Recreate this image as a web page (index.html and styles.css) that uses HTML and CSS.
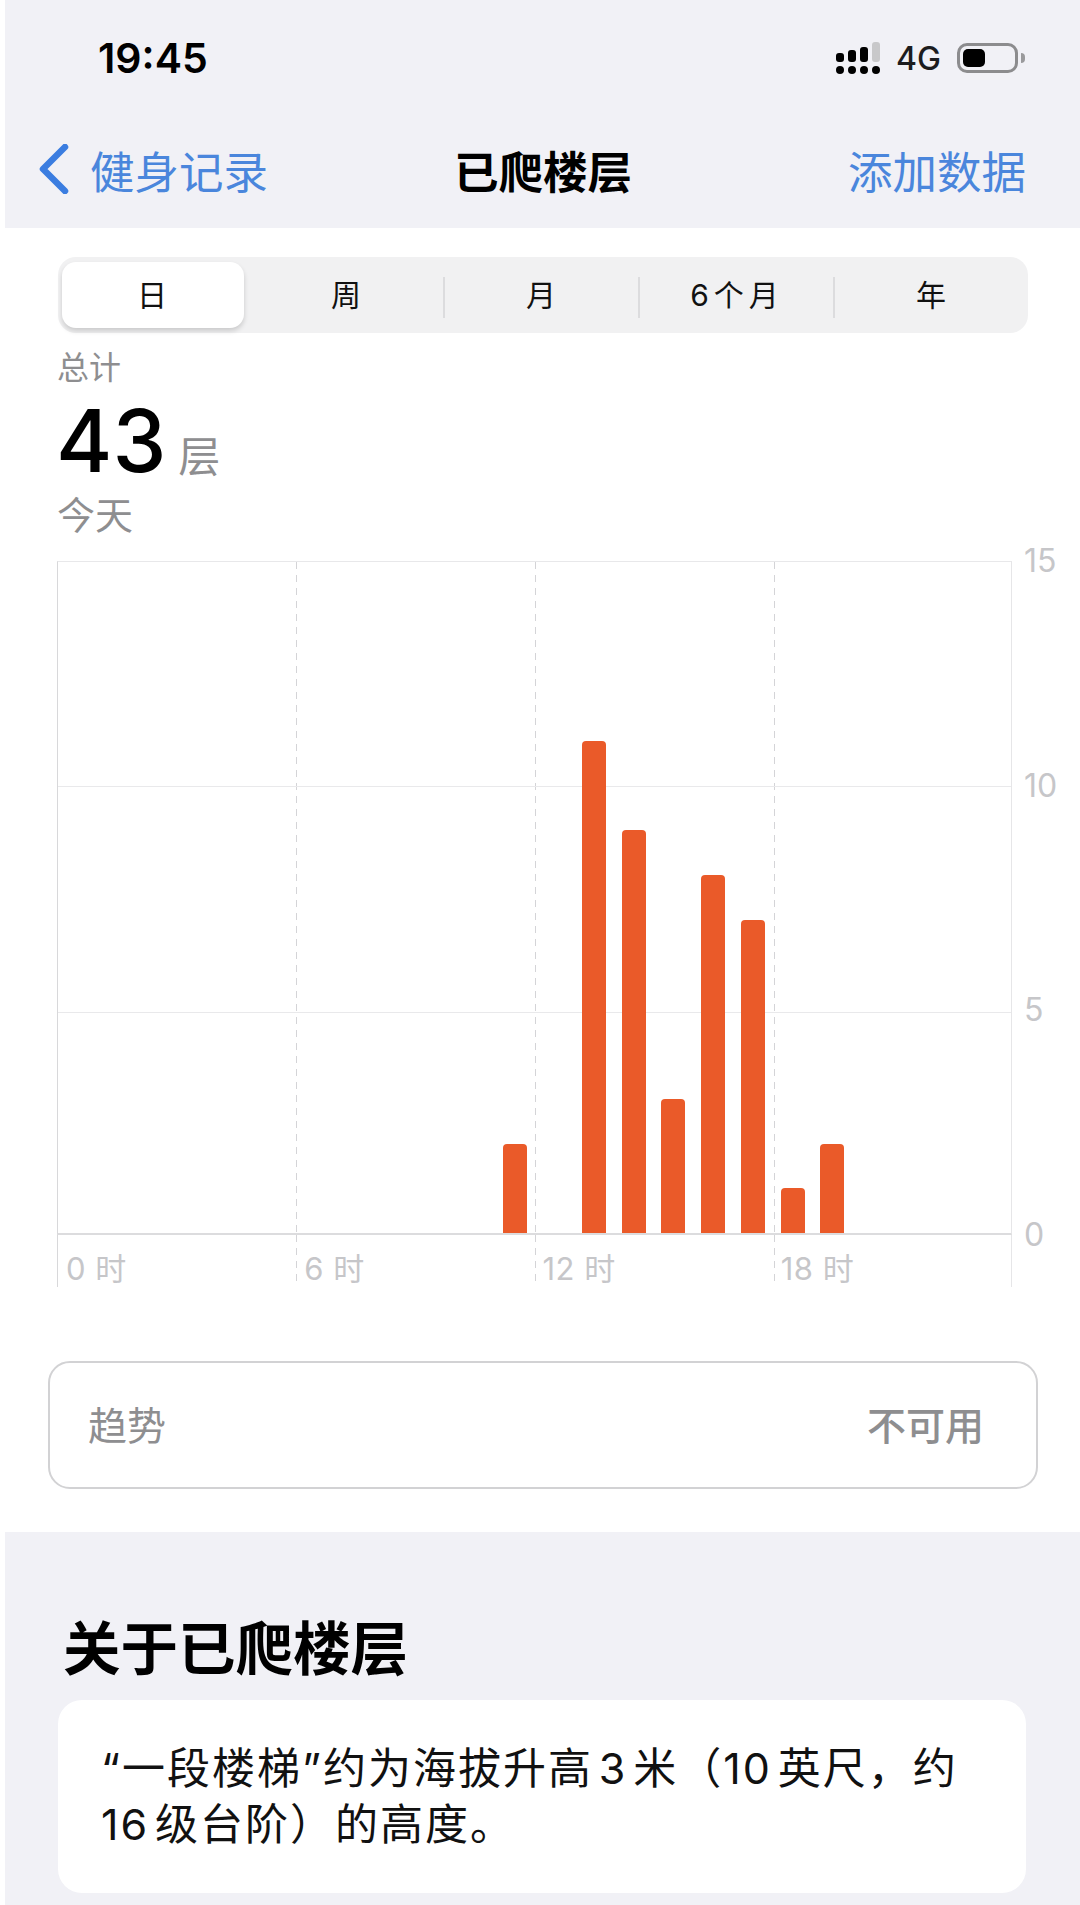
FILE: index.html
```html
<!DOCTYPE html>
<html lang="zh-CN">
<head>
    <meta charset="UTF-8">
    <meta name="viewport" content="width=device-width, initial-scale=1.0">
    <title>已爬楼层</title>
    <link rel="stylesheet" href="styles.css">
</head>
<body>
    <header class="top">
        <div class="status">
            <div class="clock">19:45</div>
            <div class="status-right">
                <div class="signal">
                    <i class="s1"></i><i class="s2"></i><i class="s3"></i><i class="s4"></i>
                    <b></b><b></b><b></b><b></b>
                </div>
                <div class="net">4G</div>
                <div class="battery"><div class="battery-fill"></div></div>
                <div class="battery-nub"></div>
            </div>
        </div>
        <nav class="nav">
            <a class="back">
                <svg class="chevron" width="32" height="50" viewBox="0 0 32 50"><path d="M28 3 L6 25 L28 47" fill="none" stroke="#3b7de0" stroke-width="6.5" stroke-linecap="round" stroke-linejoin="round"/></svg>
                <span>健身记录</span>
            </a>
            <div class="nav-title">已爬楼层</div>
            <a class="nav-add">添加数据</a>
        </nav>
    </header>

    <main class="content">
        <div class="segments">
            <div class="seg seg-on">日</div>
            <div class="seg">周</div>
            <div class="seg seg-line">月</div>
            <div class="seg seg-line seg-wide">6个月</div>
            <div class="seg seg-line">年</div>
        </div>

        <div class="total-label">总计</div>
        <div class="total"><span class="total-num">43</span><span class="total-unit">层</span></div>
        <div class="total-date">今天</div>

        <div class="chart">
            <div class="plot">
                <div class="bar" style="grid-column:12;height:13.33%"></div>
                <div class="bar" style="grid-column:14;height:73.33%"></div>
                <div class="bar" style="grid-column:15;height:60%"></div>
                <div class="bar" style="grid-column:16;height:20%"></div>
                <div class="bar" style="grid-column:17;height:53.33%"></div>
                <div class="bar" style="grid-column:18;height:46.67%"></div>
                <div class="bar" style="grid-column:19;height:6.67%"></div>
                <div class="bar" style="grid-column:20;height:13.33%"></div>
            </div>
            <div class="y-axis">
                <span>15</span><span>10</span><span>5</span><span>0</span>
            </div>
            <div class="x-axis">
                <span>0 时</span><span>6 时</span><span>12 时</span><span>18 时</span>
            </div>
        </div>

        <div class="trend">
            <span class="trend-name">趋势</span>
            <span class="trend-value">不可用</span>
        </div>
    </main>

    <section class="about">
        <h2>关于已爬楼层</h2>
        <div class="about-card">
            <div class="about-line">“一段楼梯”约为海拔升高&#8202;3&#8202;米（10&#8202;英尺，约</div>
            <div class="about-line">16&#8202;级台阶）的高度。</div>
        </div>
    </section>
</body>
</html>
```

FILE: styles.css
```css
* {
    box-sizing: border-box;
}

body {
    margin: 0;
    width: 1080px;
    height: 1905px;
    overflow: hidden;
    background: #fff;
    color: #000;
    font-family: Inter, "Noto Sans CJK SC", sans-serif;
}

/* top bar */
.top {
    margin-left: 5px;
    height: 228px;
    background: #f1f1f6;
}

.status {
    display: flex;
    justify-content: space-between;
    align-items: center;
    height: 116px;
    padding: 0 55px 0 93px;
}

.clock {
    font-size: 41px;
    font-weight: 600;
}

.status-right {
    display: flex;
    align-items: center;
}

.signal {
    display: grid;
    grid-template-columns: repeat(4, 8px);
    grid-template-rows: 20px 8px;
    column-gap: 4px;
    row-gap: 4px;
    align-items: end;
    margin-right: 16px;
}

.signal i {
    display: block;
    width: 8px;
    border-radius: 3px;
    background: #000;
}

.signal .s1 { height: 9px; }
.signal .s2 { height: 12px; }
.signal .s3 { height: 15px; }
.signal .s4 { height: 20px; background: #c8c8ca; }

.signal b {
    display: block;
    height: 8px;
    border-radius: 4px;
    background: #000;
}

.net {
    font-size: 32px;
    font-weight: 500;
    color: #1c1c1e;
    margin-right: 16px;
}

.battery {
    width: 61px;
    height: 30px;
    padding: 3px;
    border: 3px solid #8c8c8e;
    border-radius: 10px;
}

.battery-fill {
    width: 22px;
    height: 100%;
    border-radius: 5px;
    background: #000;
}

.battery-nub {
    width: 4px;
    height: 10px;
    margin-left: 3px;
    border-radius: 0 4px 4px 0;
    background: #9a9a9c;
}

.nav {
    display: grid;
    grid-template-columns: 417px auto 1fr;
    align-items: center;
    height: 112px;
    padding: 0 54px 6px 32px;
    font-size: 44.5px;
}

.back {
    display: flex;
    align-items: center;
    gap: 21px;
    color: #4a86dc;
}

.nav-title {
    font-weight: 700;
}

.nav-add {
    text-align: right;
    color: #4a86dc;
}

/* main white area */
.content {
    padding: 29px 42px 0 48px;
}

.segments {
    display: flex;
    width: 970px;
    height: 76px;
    margin-left: 10px;
    padding: 5px 0 5px 4px;
    border-radius: 18px;
    background: #f1f1f2;
    font-size: 30px;
    color: #111;
}

.seg {
    flex: 1;
    position: relative;
    display: flex;
    justify-content: center;
    align-items: center;
    padding-bottom: 4px;
    letter-spacing: 2px;
}

.seg-line {
    padding-left: 3px;
}

.seg-wide {
    letter-spacing: 5px;
}

.seg-on {
    flex: none;
    width: 182px;
    margin-right: 7px;
    border-radius: 14px;
    background: #fff;
    box-shadow: 0 3px 5px rgba(0, 0, 0, 0.16);
}

.seg-line::before {
    content: "";
    position: absolute;
    left: 0;
    top: 15px;
    bottom: 10px;
    width: 2px;
    background: #dcdcde;
}

.total-label {
    margin: 15px 0 0 9px;
    font-size: 32px;
    line-height: 40px;
    color: #8e8e90;
}

.total {
    display: flex;
    align-items: baseline;
    margin: 8px 0 0 8px;
    line-height: 90px;
}

.total-num {
    font-size: 86px;
    font-weight: 500;
}

.total-unit {
    margin-left: 12px;
    font-size: 42px;
    color: #8e8e90;
}

.total-date {
    margin: -10px 0 0 9px;
    font-size: 38px;
    line-height: 46px;
    color: #8e8e90;
}

/* chart */
.chart {
    display: grid;
    grid-template-columns: 955px 1fr;
    grid-template-rows: 674px 52px;
    margin: 23px 0 0 9px;
}

.plot,
.x-axis {
    background-image:
        repeating-linear-gradient(to bottom, #d4d4d7 0 7px, transparent 7px 13px),
        repeating-linear-gradient(to bottom, #d4d4d7 0 7px, transparent 7px 13px),
        repeating-linear-gradient(to bottom, #d4d4d7 0 7px, transparent 7px 13px);
    background-size: 1px 100%;
    background-position: 238px 0, 477px 0, 716px 0;
    background-repeat: no-repeat;
    border-left: 1px solid #d8d8da;
    border-right: 1px solid #e6e6e8;
}

.plot {
    position: relative;
    display: grid;
    grid-template-columns: repeat(24, 1fr);
    align-items: end;
    justify-items: center;
    border-top: 1px solid #e8e8ea;
    border-bottom: 2px solid #dcdcde;
}

.plot::before {
    content: "";
    position: absolute;
    left: 0;
    right: 0;
    top: 224px;
    height: 225px;
    border-top: 1px solid #e9e9eb;
    border-bottom: 1px solid #e9e9eb;
}

.bar {
    position: relative;
    grid-row: 1;
    align-self: end;
    width: 24px;
    border-radius: 4px 4px 0 0;
    background: #ea5a29;
}

.y-axis {
    display: flex;
    flex-direction: column;
    justify-content: space-between;
    height: 714px;
    margin-top: -20px;
    padding-left: 12px;
    font-size: 32px;
    line-height: 40px;
    color: #c6c6c9;
}

.x-axis {
    display: grid;
    grid-template-columns: repeat(4, 1fr);
    grid-column: 1;
    font-size: 31px;
    line-height: 38px;
    letter-spacing: 0.5px;
    color: #c6c6c9;
}

.x-axis span {
    padding: 15px 0 0 8px;
}

/* trend */
.trend {
    display: flex;
    justify-content: space-between;
    align-items: center;
    width: 990px;
    height: 128px;
    margin-top: 74px;
    padding: 0 52px 4px 38px;
    border: 2px solid #d2d2d4;
    border-radius: 22px;
    font-size: 39px;
    color: #8e8e90;
}

.trend-value {
    font-weight: 500;
}

/* about */
.about {
    position: absolute;
    left: 5px;
    right: 0;
    bottom: 0;
    height: 373px;
    padding: 77px 54px 0 53px;
    background: #f1f1f6;
}

.about h2 {
    margin: 0 0 0 5px;
    font-size: 57.5px;
    font-weight: 700;
    line-height: 80px;
}

.about-card {
    height: 193px;
    margin-top: 11px;
    padding: 40px 0 0 43px;
    border-radius: 24px;
    background: #fff;
    font-size: 43px;
    letter-spacing: 2px;
    line-height: 56px;
    color: #111;
    white-space: nowrap;
}
```
